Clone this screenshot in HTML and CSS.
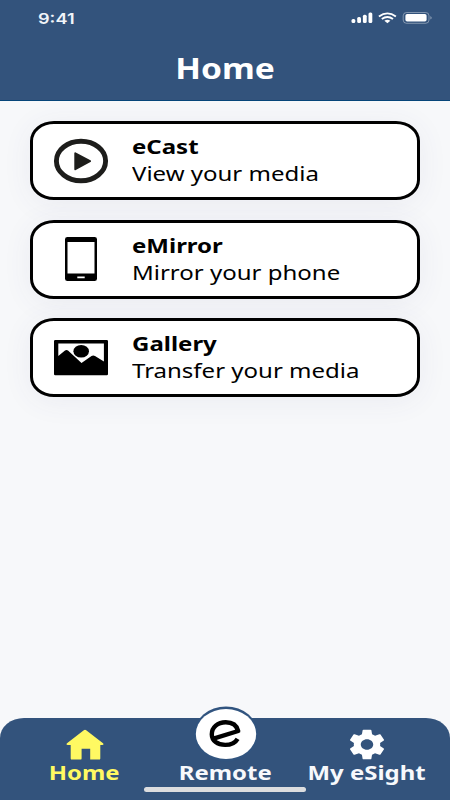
FILE: index.html
```html
<!DOCTYPE html>
<html lang="en">
<head>
<meta charset="utf-8">
<title>Home</title>
<link rel="stylesheet" href="styles.css">
</head>
<body>
<div class="app">
  <header class="header">
    <div class="status">
      <span class="time">9:41</span>
      <svg class="indicators" viewBox="0 0 82 14" width="82" height="14">
        <g fill="#fff">
          <rect x="0.500" y="7" width="3.800" height="4" rx="1.500"/>
          <rect x="6.200" y="5" width="3.800" height="6" rx="1.500"/>
          <rect x="11.900" y="2.800" width="3.800" height="8.200" rx="1.500"/>
          <rect x="17.500" y="0.500" width="3.800" height="10.500" rx="1.500"/>
          <path d="M33.400 8.800Q36.400 6.700 39.400 8.800L36.400 11.200Z"/>
          <rect x="54.400" y="2" width="21.200" height="7.600" rx="1.800"/>
        </g>
        <g fill="none" stroke="#fff" stroke-width="1.900">
          <path d="M27.900 4.500Q36.400 -1.700 44.900 4.500"/>
          <path d="M30.800 7Q36.400 3 42 7"/>
        </g>
        <rect x="52.200" y="0.500" width="25.800" height="10.800" rx="3.300" fill="none" stroke="#fff" stroke-opacity=".38"/>
        <path d="M79.400 4Q82 5.800 79.400 7.600Z" fill="#fff" opacity=".45"/>
      </svg>
    </div>
    <h1 class="title">Home</h1>
  </header>

  <main class="cards">
    <a class="card">
      <svg class="card-icon" viewBox="0 0 56 46" width="56" height="46">
        <ellipse cx="28" cy="23" rx="24.600" ry="19.800" fill="none" stroke="#1d1d1b" stroke-width="4.900"/>
        <path d="M22.300 15.300L37 23.200L22.300 31.200Z" fill="#1d1d1b" stroke="#1d1d1b" stroke-width="2" stroke-linejoin="round"/>
      </svg>
      <div class="card-text"><b>eCast</b><span>View your media</span></div>
    </a>
    <a class="card">
      <svg class="card-icon" viewBox="0 0 56 46" width="56" height="46">
        <path fill-rule="evenodd" d="M14.500 1H41.500Q44 1 44 3.200V42.800Q44 45 41.500 45H14.500Q12 45 12 42.800V3.200Q12 1 14.500 1ZM14.500 6V37.600H41.500V6ZM24.300 40.500V42.300H31.700V40.500Z"/>
      </svg>
      <div class="card-text"><b>eMirror</b><span>Mirror your phone</span></div>
    </a>
    <a class="card">
      <svg class="card-icon" viewBox="0 0 56 46" width="56" height="46">
        <path fill-rule="evenodd" d="M2.200 5H53.800Q55 5 55 6.200V39Q55 40.200 53.800 40.200H2.200Q1 40.200 1 39V6.200Q1 5 2.200 5ZM5.300 8.500V21L12 15.600Q13.500 14.200 15 15.600L28.500 28L38.500 21Q40.200 19.900 42 21L50.900 26.600V8.500Z"/>
        <ellipse cx="28.200" cy="16.200" rx="7.800" ry="6.300"/>
      </svg>
      <div class="card-text"><b>Gallery</b><span>Transfer your media</span></div>
    </a>
  </main>

  <nav class="nav">
    <a class="tab active">
      <svg class="tab-icon" viewBox="0 0 38 31" width="38" height="31">
        <path d="M17.800 1.200Q19 .3 20.200 1.200L37 14.200Q38.300 15.800 36.200 16H34.300V29.400Q34.300 30.600 32.900 30.600H24.200V19.700H15.600V29.400Q15.600 30.600 14.200 30.600H6Q4.700 30.600 4.700 29.400V16H1.800Q-.3 15.800 1 14.200Z" fill="#fff962"/>
      </svg>
      <span>Home</span>
    </a>
    <a class="tab">
      <svg class="remote" viewBox="0 0 66 56" width="66" height="56">
        <ellipse cx="33" cy="28" rx="32" ry="27.500" fill="#31547f"/>
        <ellipse cx="33" cy="28" rx="30.200" ry="25" fill="#fff"/>
        <path d="M20.500 32.600L45.200 25C43.600 18.900 39 16.300 32.700 16.300C24.700 16.300 18.800 21.300 18.800 28.300C18.800 35 24.500 38.900 32.200 38.900C38.200 38.900 42.300 36.800 44.600 32.800" fill="none" stroke="#000" stroke-width="4.400" stroke-linejoin="round"/>
      </svg>
      <span>Remote</span>
    </a>
    <a class="tab">
      <svg class="gear" viewBox="0 0 24 24" width="44" height="37" preserveAspectRatio="none">
        <path fill="#fff" d="M19.140 12.940c.04-.3.06-.61.06-.94 0-.32-.02-.64-.07-.94l2.030-1.580c.18-.14.23-.41.12-.61l-1.920-3.320c-.12-.22-.37-.29-.59-.22l-2.390.96c-.5-.38-1.030-.7-1.620-.94l-.36-2.540c-.04-.24-.24-.41-.48-.41h-3.840c-.24 0-.43.17-.47.41l-.36 2.540c-.59.24-1.130.57-1.620.94l-2.390-.96c-.22-.08-.47 0-.59.22L2.740 8.870c-.12.21-.08.47.12.61l2.030 1.580c-.05.3-.09.63-.09.94s.02.64.07.94l-2.030 1.580c-.18.14-.23.41-.12.61l1.920 3.320c.12.22.37.29.59.22l2.390-.96c.5.38 1.030.7 1.620.94l.36 2.540c.05.24.24.41.48.41h3.840c.24 0 .44-.17.47-.41l.36-2.540c.59-.24 1.130-.56 1.620-.94l2.390.96c.22.08.47 0 .59-.22l1.920-3.320c.12-.22.07-.47-.12-.61zM12 15.400c-1.880 0-3.400-1.520-3.400-3.400s1.520-3.400 3.400-3.400 3.400 1.520 3.400 3.400-1.520 3.400-3.400 3.400z"/>
      </svg>
      <span>My eSight</span>
    </a>
    <div class="home-bar"></div>
  </nav>
</div>
</body>
</html>
```
FILE: styles.css
```css
* { box-sizing: border-box; }
body { margin: 0; font-family: "Noto Sans", "Liberation Sans", sans-serif; }
.app {
  width: 450px;
  height: 800px;
  display: flex;
  flex-direction: column;
  background: #f7f8fa;
  overflow: hidden;
}
.header {
  height: 101px;
  background: #33537c;
  border-bottom: 1px solid #064579;
  color: #fff;
}
.status {
  height: 48px;
  padding: 12px 18px 0 38px;
  display: flex;
  justify-content: space-between;
  align-items: flex-start;
}
.time {
  font: 600 15px/13px Inter, "Liberation Sans", sans-serif;
  transform: scaleX(1.21);
  transform-origin: left;
  color: #f1f4f9;
}
.indicators { overflow: visible; margin-right: -1px; }
.title {
  margin: 0;
  font-size: 28px;
  line-height: 40px;
  font-weight: 700;
  text-align: center;
  transform: scaleX(1.2);
}
.cards {
  flex: 1;
  padding: 20px 30px 0;
  display: flex;
  flex-direction: column;
  gap: 19.500px;
}
.card {
  height: 79px;
  flex: none;
  display: flex;
  align-items: center;
  padding-left: 19.500px;
  background: #fff;
  border: solid #000;
  border-width: 3px 3.500px;
  border-radius: 24px / 20px;
  box-shadow: 0 4px 30px rgba(75, 65, 130, .07);
}
.card-icon { flex: none; }
.card-text {
  margin-left: 23px;
  padding-top: 1px;
  display: flex;
  flex-direction: column;
  font-size: 19.700px;
  line-height: 26.600px;
  white-space: nowrap;
  transform: scaleX(1.219);
  transform-origin: left;
}
.nav {
  position: relative;
  height: 82px;
  display: grid;
  grid-template-columns: 169px 112px 172px;
  grid-template-rows: 82px;
  background: #33537c;
  border-radius: 24px 24px 0 0 / 20px 20px 0 0;
  color: #f7f9fc;
}
.tab {
  display: flex;
  flex-direction: column;
  align-items: center;
  justify-content: flex-end;
  padding-bottom: 14px;
  white-space: nowrap;
}
.tab span {
  font-size: 19.700px;
  line-height: 26px;
  font-weight: 700;
  transform: scaleX(1.215);
}
.active { color: #fff962; }
.tab-icon { flex: none; }
.gear { flex: none; margin-bottom: -3px; }
.remote { flex: none; margin: 0 0 -2px 2px; }
.home-bar {
  position: absolute;
  left: 144px;
  bottom: 8px;
  width: 162px;
  height: 5px;
  border-radius: 3px;
  background: #dcdddf;
}
```
